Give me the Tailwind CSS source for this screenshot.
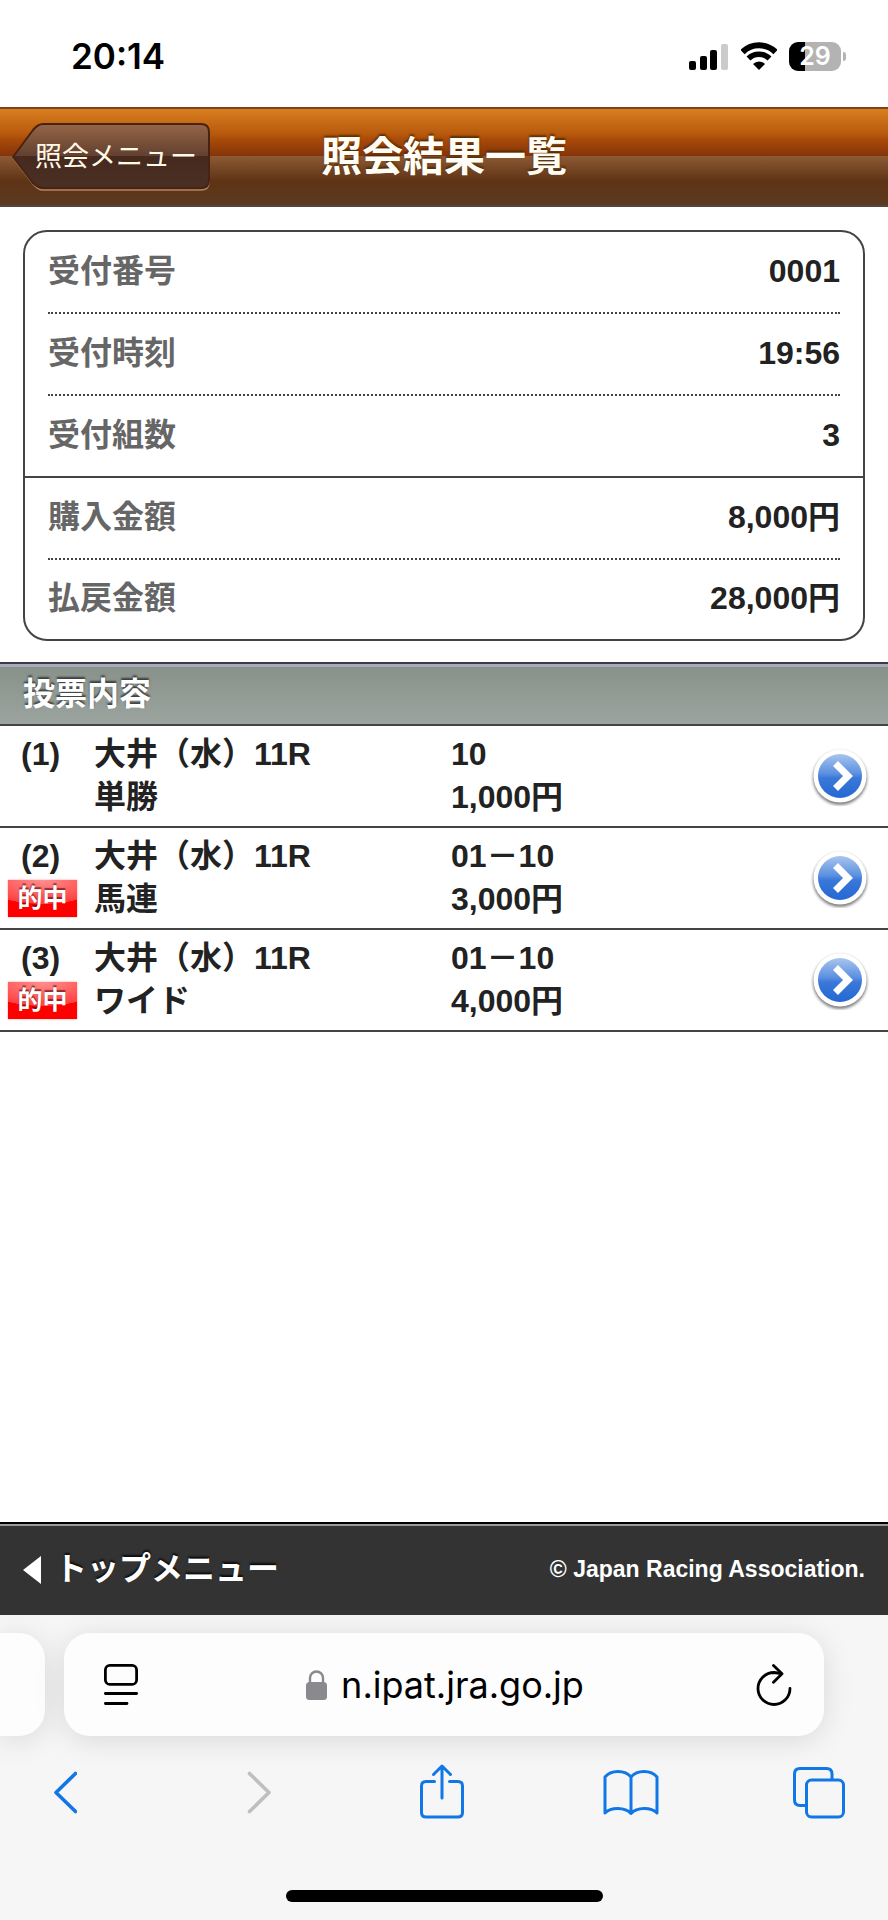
<!DOCTYPE html>
<html lang="ja">
<head>
  <meta charset="UTF-8">
  <meta name="viewport" content="width=device-width, initial-scale=1.0">
  <title>照会結果一覧</title>
  <script src="https://cdn.jsdelivr.net/npm/@tailwindcss/browser@4"></script>
</head>
<body class="flex min-h-screen flex-col bg-white font-['Liberation_Sans','Noto_Sans_CJK_JP',sans-serif] text-[32px] leading-[43px] font-bold text-[#222]">

  <!-- Status bar -->
  <div class="flex h-[107px] items-center justify-between pt-1.5 pr-[42px] pl-[71px] text-black">
    <time class="font-[Inter,sans-serif] text-[35px] font-semibold">20:14</time>
    <div class="flex items-center gap-3">
      <svg class="h-[30px] w-10" viewBox="0 0 40 30" aria-hidden="true">
        <rect x="0" y="19" width="7" height="9" rx="2"/>
        <rect x="11" y="14" width="7" height="14" rx="2"/>
        <rect x="21" y="8" width="7" height="20" rx="2"/>
        <rect x="32" y="2" width="7" height="26" rx="2" fill="#cbcbcb"/>
      </svg>
      <svg class="h-[30px] w-9" viewBox="0 0 36 30" fill="none" stroke="#000" aria-hidden="true">
        <path d="M1.500 10 A23.500 23.500 0 0 1 34.500 10" stroke-width="6"/>
        <path d="M7.500 16.500 A15 15 0 0 1 28.500 16.500" stroke-width="5.600"/>
        <path d="M18 28 L12 22 A8.400 8.400 0 0 1 24 22 Z" fill="#000" stroke="none"/>
      </svg>
      <div class="flex items-center gap-0.5">
        <div class="flex h-[29px] w-[52px] items-center justify-center rounded-[9px] bg-linear-to-r from-black from-30% to-[#b3b3b3] to-30% font-[Inter,sans-serif] text-[25px] leading-none font-semibold text-white">29</div>
        <div class="h-[9px] w-[3px] rounded-r-full bg-[#b3b3b3]"></div>
      </div>
    </div>
  </div>

  <!-- Title bar -->
  <header class="grid h-[100px] grid-cols-[1fr_auto_1fr] items-center border-t-2 border-b-2 border-t-[#7d4318] border-b-[#54453c] bg-[linear-gradient(#d87e20,#b95b0d_25%,#a84a09_32%,#84330a_49%,#8d5a34_49%,#5f3315_75%,#5c3a20)] px-3">
    <a href="#" class="relative flex h-[68px] w-[198px] items-center justify-center pl-2.5 text-[27px] font-normal text-[#fffbe8]">
      <svg class="absolute inset-0 h-full w-full" viewBox="0 0 198 68" aria-hidden="true">
        <defs>
          <linearGradient id="back" x1="0" y1="0" x2="0" y2="1">
            <stop offset="0" stop-color="#966547"/>
            <stop offset=".5" stop-color="#62402f"/>
            <stop offset=".5" stop-color="#47291d"/>
            <stop offset="1" stop-color="#493025"/>
          </linearGradient>
        </defs>
        <path d="M1 35 L21 8 Q26 2 31 2 H189 Q197 2 197 10 V59 Q197 67 189 67 H31 Q26 67 21 61 Z" fill="none" stroke="#b08469" stroke-width="1.500"/>
        <path d="M1 34 L21 7 Q26 1 31 1 H189 Q197 1 197 9 V57 Q197 65 189 65 H31 Q26 65 21 60 Z" fill="url(#back)" stroke="#472412" stroke-width="2"/>
      </svg>
      <span class="relative">照会メニュー</span>
    </a>
    <h1 class="text-[41px] leading-none text-[#fffdf5] text-shadow-[0_-2px_2px_rgb(70_40_0/0.8)]">照会結果一覧</h1>
  </header>

  <main class="flex-1">
    <!-- Receipt summary -->
    <dl class="mx-[23px] mt-[23px] mb-[21px] rounded-3xl border-2 border-[#444]">
      <div class="mx-[23px] flex h-[82px] items-center justify-between border-b-2 border-dotted border-[#444] pb-0.5">
        <dt class="text-[#666]">受付番号</dt>
        <dd>0001</dd>
      </div>
      <div class="mx-[23px] flex h-[82px] items-center justify-between border-b-2 border-dotted border-[#444] pb-0.5">
        <dt class="text-[#666]">受付時刻</dt>
        <dd>19:56</dd>
      </div>
      <div class="flex h-[82px] items-center justify-between border-b-2 border-[#444] px-[23px] pb-0.5">
        <dt class="text-[#666]">受付組数</dt>
        <dd>3</dd>
      </div>
      <div class="mx-[23px] flex h-[82px] items-center justify-between border-b-2 border-dotted border-[#444] pb-0.5">
        <dt class="text-[#666]">購入金額</dt>
        <dd>8,000円</dd>
      </div>
      <div class="mx-[23px] flex h-[79px] items-center justify-between pb-0.5">
        <dt class="text-[#666]">払戻金額</dt>
        <dd>28,000円</dd>
      </div>
    </dl>

    <!-- Bets -->
    <h2 class="flex h-16 items-center border-t-2 border-b-2 border-t-[#3c3a48] border-b-[#444] bg-[linear-gradient(#a9aabd_3px,#89918b_3px,#9ba49e)] px-[23px] text-white text-shadow-[0_-2px_2px_rgb(0_0_0/0.6)]">投票内容</h2>
    <ul>
      <li class="border-b-2 border-[#444]">
        <a href="#" class="grid h-[100px] grid-cols-[86px_357px_1fr_auto] items-center pr-[18px] pl-2">
          <div class="h-[86px] pl-[13px]">(1)</div>
          <div>大井（水）11R<br>単勝</div>
          <div>10<br>1,000円</div>
          <svg class="size-[60px]" viewBox="0 0 60 60" aria-hidden="true">
            <defs>
              <linearGradient id="ball" x1="0" y1="0" x2="0" y2="1">
                <stop offset="0" stop-color="#a9c5ee"/>
                <stop offset=".45" stop-color="#5a8fe0"/>
                <stop offset=".55" stop-color="#3a78d8"/>
                <stop offset="1" stop-color="#2468d4"/>
              </linearGradient>
              <filter id="soft" x="-20%" y="-20%" width="140%" height="140%">
                <feGaussianBlur stdDeviation="1.500"/>
              </filter>
            </defs>
            <circle cx="30" cy="32" r="27" fill="#000" opacity=".5" filter="url(#soft)"/>
            <circle cx="30" cy="30" r="26.500" fill="#fff"/>
            <circle cx="30" cy="30" r="22" fill="url(#ball)"/>
            <path d="M25.500 17.500 L38 30 L25.500 42.500" fill="none" stroke="#fff" stroke-width="7"/>
          </svg>
        </a>
      </li>
      <li class="border-b-2 border-[#444]">
        <a href="#" class="grid h-[100px] grid-cols-[86px_357px_1fr_auto] items-center pr-[18px] pl-2">
          <div class="h-[86px]">
            <div class="pl-[13px]">(2)</div>
            <div class="mt-0.5 h-[37px] w-[69px] bg-[radial-gradient(ellipse_90%_65%_at_50%_0%,#ff9090,#ff4040_98%,#f00_100%)] text-center text-[25px] leading-[37px] text-white shadow-[0_0_2px_#f99] text-shadow-[0_-2px_1px_rgb(80_0_0/0.6)]">的中</div>
          </div>
          <div>大井（水）11R<br>馬連</div>
          <div>01－10<br>3,000円</div>
          <svg class="size-[60px]" viewBox="0 0 60 60" aria-hidden="true">
            <circle cx="30" cy="32" r="27" fill="#000" opacity=".5" filter="url(#soft)"/>
            <circle cx="30" cy="30" r="26.500" fill="#fff"/>
            <circle cx="30" cy="30" r="22" fill="url(#ball)"/>
            <path d="M25.500 17.500 L38 30 L25.500 42.500" fill="none" stroke="#fff" stroke-width="7"/>
          </svg>
        </a>
      </li>
      <li class="border-b-2 border-[#444]">
        <a href="#" class="grid h-[100px] grid-cols-[86px_357px_1fr_auto] items-center pr-[18px] pl-2">
          <div class="h-[86px]">
            <div class="pl-[13px]">(3)</div>
            <div class="mt-0.5 h-[37px] w-[69px] bg-[radial-gradient(ellipse_90%_65%_at_50%_0%,#ff9090,#ff4040_98%,#f00_100%)] text-center text-[25px] leading-[37px] text-white shadow-[0_0_2px_#f99] text-shadow-[0_-2px_1px_rgb(80_0_0/0.6)]">的中</div>
          </div>
          <div>大井（水）11R<br>ワイド</div>
          <div>01－10<br>4,000円</div>
          <svg class="size-[60px]" viewBox="0 0 60 60" aria-hidden="true">
            <circle cx="30" cy="32" r="27" fill="#000" opacity=".5" filter="url(#soft)"/>
            <circle cx="30" cy="30" r="26.500" fill="#fff"/>
            <circle cx="30" cy="30" r="22" fill="url(#ball)"/>
            <path d="M25.500 17.500 L38 30 L25.500 42.500" fill="none" stroke="#fff" stroke-width="7"/>
          </svg>
        </a>
      </li>
    </ul>
  </main>

  <!-- Site footer -->
  <footer class="flex h-[93px] items-center justify-between border-t-2 border-black bg-[linear-gradient(#999_2px,#333_2px)] px-[23px] text-white">
    <a href="#" class="flex items-center gap-3.5 text-shadow-[0_-2px_2px_rgb(0_0_0/0.8)]">
      <svg class="h-7 w-[18px]" viewBox="0 0 18 28" fill="#fff" aria-hidden="true"><path d="M0 14 L18 0 V28 Z"/></svg>
      トップメニュー
    </a>
    <small class="text-[23px]">© Japan Racing Association.</small>
  </footer>

  <!-- Browser bar -->
  <div class="flex h-[305px] flex-col overflow-hidden bg-[#f6f6f7] pt-[18px] font-normal text-black">
    <div class="flex h-[103px] gap-[19px] pr-16">
      <div class="w-[45px] rounded-r-[26px] bg-[#fdfdfd] shadow-[0_4px_30px_rgb(0_0_0/0.12)]"></div>
      <div class="flex flex-1 items-center justify-between rounded-[26px] bg-[#fdfdfd] pr-8 pl-10 shadow-[0_4px_30px_rgb(0_0_0/0.12)]">
        <button type="button" aria-label="ページメニュー">
          <svg class="h-[42px] w-[34px]" viewBox="0 0 34 42" fill="none" stroke="#000" stroke-width="2.800" stroke-linecap="round">
            <rect x="1.400" y="1.400" width="31.200" height="19" rx="4.500"/>
            <path d="M1.400 29.500 H32.600 M1.400 39.500 H23"/>
          </svg>
        </button>
        <label class="flex items-center gap-3.5 pr-1">
          <svg class="h-[30px] w-[21px]" viewBox="0 0 21 30" aria-label="保護された接続">
            <rect x="0" y="12" width="21" height="18" rx="3.500" fill="#8a8a8e"/>
            <path d="M4 13 V8 A6.500 6.500 0 0 1 17 8 V13" fill="none" stroke="#8a8a8e" stroke-width="2.400"/>
          </svg>
          <input type="text" value="n.ipat.jra.go.jp" aria-label="アドレス" class="field-sizing-content bg-transparent font-[Inter,sans-serif] text-[36px] leading-[48px] outline-none">
        </label>
        <button type="button" aria-label="再読み込み">
          <svg class="h-[42px] w-9" viewBox="0 0 36 42" fill="none" stroke="#000" stroke-width="2.800" stroke-linecap="round" stroke-linejoin="round">
            <path d="M34 24.500 A16 16 0 1 1 18 8.500 L25 9.500"/>
            <path d="M17.500 1.500 L26 9.800 L17.500 18.200"/>
          </svg>
        </button>
      </div>
    </div>

    <nav class="mt-7 flex items-center justify-between pr-[41px] pl-[37px]">
      <button type="button" aria-label="戻る" class="flex w-14 justify-center">
        <svg class="h-14 w-6" viewBox="0 0 24 56" fill="none" stroke="#1277e6" stroke-width="3.600" stroke-linecap="round" stroke-linejoin="round"><path d="M22.500 9.500 L3 28.500 L22.500 47.500"/></svg>
      </button>
      <button type="button" aria-label="進む" disabled class="flex w-14 justify-center">
        <svg class="h-14 w-9" viewBox="0 0 36 56" fill="none" stroke="#bfbfbf" stroke-width="3.600" stroke-linecap="round" stroke-linejoin="round"><path d="M13.500 9.500 L33 28.500 L13.500 47.500"/></svg>
      </button>
      <button type="button" aria-label="共有" class="flex w-14 justify-center">
        <svg class="h-14 w-11" viewBox="0 0 44 56" fill="none" stroke="#1277e6" stroke-width="3" stroke-linecap="round" stroke-linejoin="round">
          <path d="M14.500 17.500 H6 Q1.500 17.500 1.500 22 V48.500 Q1.500 53 6 53 H38 Q42.500 53 42.500 48.500 V22 Q42.500 17.500 38 17.500 H29.500"/>
          <path d="M22 34 V2 M13.500 10.500 L22 2 L30.500 10.500"/>
        </svg>
      </button>
      <button type="button" aria-label="ブックマーク" class="flex w-14 justify-center">
        <svg class="h-14 w-14" viewBox="0 0 56 56" fill="none" stroke="#1277e6" stroke-width="3" stroke-linecap="round" stroke-linejoin="round">
          <path d="M28 13 C22 5.500 8 5.500 2 13 V49 C8 43 22 43 28 49.500 C34 43 48 43 54 49 V13 C48 5.500 34 5.500 28 13 V49.500"/>
        </svg>
      </button>
      <button type="button" aria-label="タブ一覧" class="flex w-14 justify-center">
        <svg class="h-14 w-[52px]" viewBox="0 0 52 56" fill="none" stroke="#1277e6" stroke-width="3" stroke-linejoin="round">
          <path d="M12.500 41.500 H7 Q1.500 41.500 1.500 36 V10 Q1.500 4.500 7 4.500 H33.500 Q39 4.500 39 10 V16"/>
          <rect x="13.500" y="16" width="37" height="37" rx="5"/>
        </svg>
      </button>
    </nav>

    <div class="mx-auto mt-auto mb-[18px] h-3 w-[317px] rounded-full bg-black"></div>
  </div>
</body>
</html>
